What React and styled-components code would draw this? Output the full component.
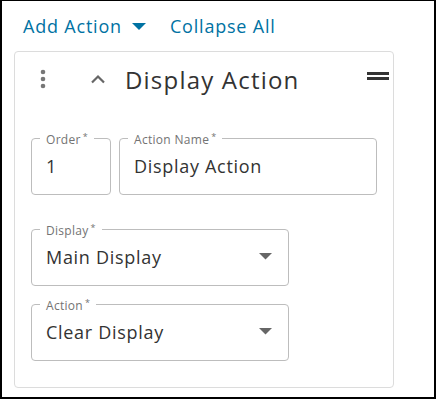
import React from 'react';
import styled, { createGlobalStyle } from 'styled-components';

const GlobalStyle = createGlobalStyle`
  * { box-sizing: border-box; }
  body {
    margin: 0;
    background: #fff;
    font-family: "Open Sans", "Noto Sans", sans-serif;
  }
`;

const Frame = styled.div`
  width: 436px;
  height: 399px;
  border-style: solid;
  border-color: #000;
  border-width: 1px 2px 2px 2px;
  padding: 0 0 0 12px;
  overflow: hidden;
`;

const Toolbar = styled.div`
  display: flex;
  align-items: center;
  gap: 24px;
  height: 50px;
  padding: 0 0 0 9px;
`;

const LinkButton = styled.button`
  display: flex;
  align-items: center;
  gap: 10px;
  border: none;
  background: none;
  padding: 0;
  color: #0072a3;
  font-family: inherit;
  font-size: 18px;
  letter-spacing: 0.8px;
  cursor: pointer;
`;

const Card = styled.div`
  width: 380px;
  height: 337px;
  border: 1px solid #dcdcdc;
  border-radius: 4px;
  padding: 0 4px 0 15px;
`;

const Header = styled.div`
  display: flex;
  align-items: center;
  height: 54px;
`;

const IconSlot = styled.span`
  display: flex;
  justify-content: ${p => p.$start ? 'flex-start' : 'center'};
  align-items: center;
  width: ${p => p.$w}px;
  padding-left: ${p => p.$pl || 0}px;
`;

const Title = styled.h2`
  flex: 1;
  margin: 0;
  font-weight: 400;
  font-size: 24px;
  letter-spacing: 1.2px;
  color: #333;
`;

const HandleBox = styled.span`
  display: flex;
  margin: 0 0 6px 0;
`;

const Fields = styled.div`
  display: grid;
  grid-template-columns: 80px 258px;
  column-gap: 8px;
  padding: 24px 0 0 1px;
`;

const Field = styled.fieldset`
  grid-column: ${p => p.$span ? '1 / span 2' : 'auto'};
  width: ${p => p.$width ? p.$width + 'px' : 'auto'};
  margin: 0 0 ${p => p.$gap || 0}px 0;
  height: 65px;
  padding: 0 14px 0 14px;
  border: 1px solid #bdbdbd;
  border-radius: 4px;
  display: flex;
  align-items: center;
  justify-content: space-between;
  min-width: 0;
`;

const Legend = styled.legend`
  margin-left: -6px;
  padding: 0 6px;
  font-size: 12px;
  line-height: 14px;
  color: #737373;
  letter-spacing: 0.3px;
`;

const Req = styled.sup`
  font-size: 9px;
  margin-left: 2px;
  vertical-align: 4px;
`;

const Value = styled.span`
  font-size: 18px;
  color: #333;
  letter-spacing: 0.7px;
  padding-bottom: 10px;
`;

const CaretBox = styled.span`
  display: flex;
  padding-bottom: 10px;
  margin-right: 2px;
`;

const Caret = ({ color = '#0072a3', size = 14 }) => (
  <svg width={size} height={size * 0.5} viewBox="0 0 14 7">
    <path d="M0 0 L14 0 L7 7 Z" fill={color} />
  </svg>
);

const Dots = () => (
  <svg width="6" height="20" viewBox="0 0 6 20">
    <circle cx="3" cy="3" r="2.3" fill="#777" />
    <circle cx="3" cy="10" r="2.3" fill="#777" />
    <circle cx="3" cy="17" r="2.3" fill="#777" />
  </svg>
);

const ChevronUp = () => (
  <svg width="16" height="10" viewBox="0 0 16 10">
    <path d="M2 8.5 L8 2.5 L14 8.5" fill="none" stroke="#666" strokeWidth="2.2" />
  </svg>
);

const Handle = () => (
  <svg width="22" height="8" viewBox="0 0 22 8">
    <rect x="0" y="0" width="22" height="3" fill="#333" />
    <rect x="0" y="5" width="22" height="3" fill="#333" />
  </svg>
);

const SelectField = ({ label, value, gap }) => (
  <Field $span $width={258} $gap={gap}>
    <Legend>{label}<Req>*</Req></Legend>
    <Value>{value}</Value>
    <CaretBox><Caret color="#666" size={13} /></CaretBox>
  </Field>
);

export default function App() {
  return (
    <Frame>
      <GlobalStyle />
      <Toolbar>
        <LinkButton>Add Action <Caret /></LinkButton>
        <LinkButton>Collapse All</LinkButton>
      </Toolbar>
      <Card>
        <Header>
          <IconSlot $w={26}><Dots /></IconSlot>
          <IconSlot $w={69} $pl={34} $start><ChevronUp /></IconSlot>
          <Title>Display Action</Title>
          <HandleBox><Handle /></HandleBox>
        </Header>
        <Fields>
          <Field $gap={26}>
            <Legend>Order<Req>*</Req></Legend>
            <Value>1</Value>
          </Field>
          <Field $gap={26}>
            <Legend>Action Name<Req>*</Req></Legend>
            <Value>Display Action</Value>
          </Field>
          <SelectField label="Display" value="Main Display" gap={10} />
          <SelectField label="Action" value="Clear Display" gap={0} />
        </Fields>
      </Card>
    </Frame>
  );
}
